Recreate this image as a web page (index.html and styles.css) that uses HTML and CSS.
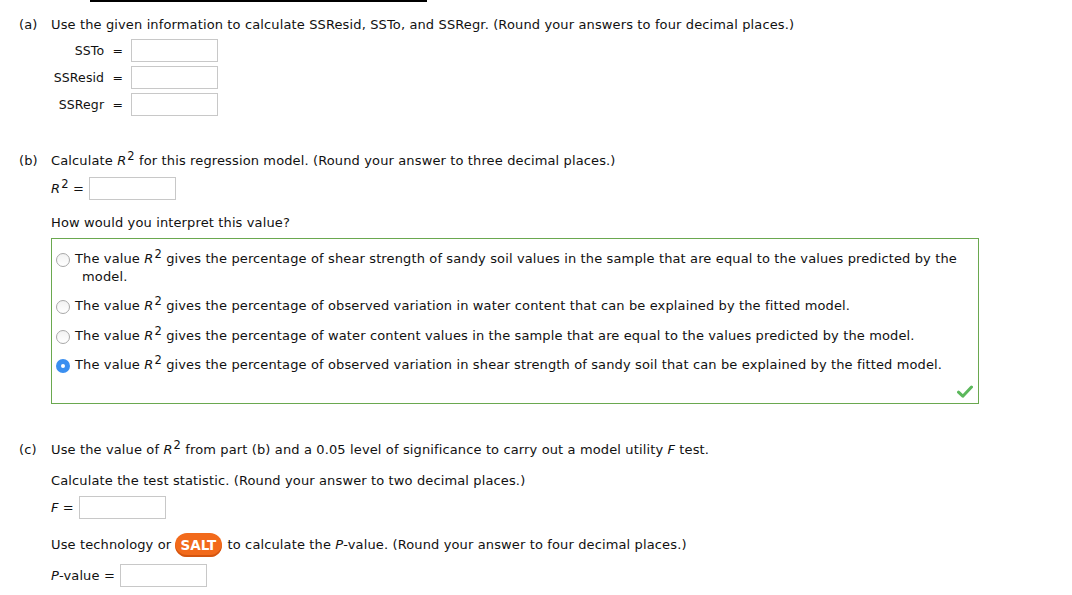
FILE: index.html
```html
<!DOCTYPE html>
<html>
<head>
<meta charset="utf-8">
<link rel="stylesheet" href="styles.css">
</head>
<body>
<div class="rule"></div>

<section class="part part-a">
  <div class="letter">(a)</div>
  <div class="body">
    <p class="line">Use the given information to calculate SSResid, SSTo, and SSRegr. (Round your answers to four decimal places.)</p>
    <div class="grid">
      <label class="lbl">SSTo &nbsp;=</label><input class="ans" type="text">
      <label class="lbl">SSResid &nbsp;=</label><input class="ans" type="text">
      <label class="lbl">SSRegr &nbsp;=</label><input class="ans" type="text">
    </div>
  </div>
</section>

<section class="part part-b">
  <div class="letter">(b)</div>
  <div class="body">
    <p class="line">Calculate <i>R</i><sup>2</sup> for this regression model. (Round your answer to three decimal places.)</p>
    <div class="inrow"><span><i>R</i><sup>2</sup> =</span><input class="ans" type="text"></div>
    <p class="line q">How would you interpret this value?</p>
    <div class="choices">
      <div class="opt"><span class="radio"></span><span class="otext">The value <i>R</i><sup>2</sup> gives the percentage of shear strength of sandy soil values in the sample that are equal to the values predicted by the model.</span></div>
      <div class="opt"><span class="radio"></span><span class="otext">The value <i>R</i><sup>2</sup> gives the percentage of observed variation in water content that can be explained by the fitted model.</span></div>
      <div class="opt"><span class="radio"></span><span class="otext">The value <i>R</i><sup>2</sup> gives the percentage of water content values in the sample that are equal to the values predicted by the model.</span></div>
      <div class="opt"><span class="radio on"></span><span class="otext">The value <i>R</i><sup>2</sup> gives the percentage of observed variation in shear strength of sandy soil that can be explained by the fitted model.</span></div>
      <div class="checkrow">
        <svg class="check" width="16" height="13" viewBox="0 0 16 13"><path d="M1.5 7.2 L5.8 11.2 L14.5 2" fill="none" stroke="#5cb85c" stroke-width="3" stroke-linecap="round" stroke-linejoin="round"/></svg>
      </div>
    </div>
  </div>
</section>

<section class="part part-c">
  <div class="letter">(c)</div>
  <div class="body">
    <p class="line">Use the value of <i>R</i><sup>2</sup> from part (b) and a 0.05 level of significance to carry out a model utility <i>F</i> test.</p>
    <p class="line sub">Calculate the test statistic. (Round your answer to two decimal places.)</p>
    <div class="inrow frow"><span><i>F</i> =</span><input class="ans" type="text"></div>
    <p class="line tech">Use technology or <span class="salt">SALT</span> to calculate the <i>P</i>-value. (Round your answer to four decimal places.)</p>
    <div class="inrow pv"><span><i>P</i>-value =</span><input class="ans" type="text"></div>
  </div>
</section>
</body>
</html>
```

FILE: styles.css
```css
html, body {
  margin: 0;
  padding: 0;
  background: #fff;
}
body {
  font-family: "DejaVu Sans", Verdana, sans-serif;
  font-size: 13px;
  letter-spacing: 0.13px;
  line-height: 18px;
  color: #111;
  width: 1072px;
  height: 595px;
  overflow: hidden;
}
.rule {
  margin-left: 90px;
  width: 337px;
  height: 2px;
  background: #000;
}
.part {
  display: flex;
  padding-left: 19px;
}
.letter {
  width: 32px;
  flex: none;
}
.body {
  flex: 1;
}
.line {
  margin: 0;
}
sup {
  font-size: 11.5px;
  line-height: 0;
  vertical-align: 5px;
  margin-left: 1px;
}
.part-a { margin-top: 14px; }
.grid {
  display: grid;
  grid-template-columns: 72px 87px;
  column-gap: 8px;
  row-gap: 4px;
  margin-top: 5px;
  align-items: center;
}
.lbl {
  text-align: right;
  font-size: 12.5px;
}
.ans {
  width: 87px;
  height: 23px;
  box-sizing: border-box;
  border: 1px solid #c8c8c8;
  margin: 0;
  padding: 0;
  background: #fff;
  font: inherit;
}
.part-b { margin-top: 36px; }
.inrow {
  display: flex;
  align-items: center;
  gap: 5px;
  margin-top: 7px;
}
.q { margin-top: 14px; }
.choices {
  margin-top: 6px;
  width: 928px;
  border: 1px solid #6aa84f;
  padding: 11px 0 5px 4px;
  box-sizing: border-box;
  height: 166px;
  display: flex;
  flex-direction: column;
  gap: 11px;
}
.opt {
  display: flex;
  align-items: flex-start;
}
.opt:nth-child(3) { margin-top: 1px; }
.radio {
  flex: none;
  width: 14px;
  height: 14px;
  box-sizing: border-box;
  border-radius: 50%;
  border: 1px solid #a8a8a8;
  background: linear-gradient(#f2f2f2, #fff);
  margin-top: 3px;
  margin-right: 5px;
  position: relative;
}
.radio.on {
  border: none;
  background: #3a8ff0;
}
.radio.on::after {
  content: "";
  position: absolute;
  left: 5px;
  top: 5px;
  width: 4px;
  height: 4px;
  border-radius: 50%;
  background: #fff;
}
.otext {
  padding-left: 7px;
  text-indent: -7px;
  padding-right: 10px;
}
.checkrow {
  margin-top: auto;
  display: flex;
  justify-content: flex-end;
  padding-right: 5px;
  margin-bottom: 1px;
}
.check { display: block; }
.part-c { margin-top: 37px; }
.sub { margin-top: 13px; }
.frow { margin-top: 6px; }
.tech {
  margin-top: 14px;
  line-height: 24px;
}
.salt {
  display: inline-block;
  vertical-align: top;
  background: #f26a1b;
  color: #fff;
  font-weight: bold;
  font-size: 13.5px;
  letter-spacing: 0;
  line-height: 24px;
  height: 24px;
  padding: 0 6px;
  border-radius: 12px;
  margin: 0 1px 0 -1px;
  box-shadow: inset 0 -2px 0 #d45510;
}
.pv { margin-top: 7px; }
```
